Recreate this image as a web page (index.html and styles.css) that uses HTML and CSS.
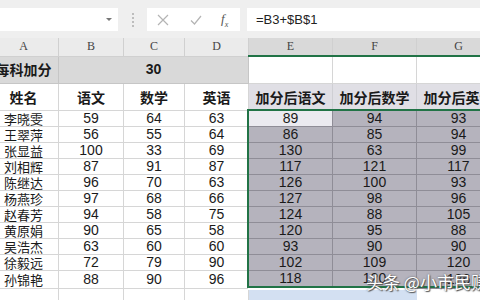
FILE: index.html
```html
<!DOCTYPE html>
<html lang="zh-CN">
<head>
<meta charset="UTF-8">
<title>每科加分</title>
<link rel="stylesheet" href="styles.css">
</head>
<body>
<div class="app">
  <div class="toolbar">
    <div class="namebox"><span class="arrow"></span></div>
    <div class="grip"><i></i><i></i><i></i><i></i></div>
    <div class="fxbox">
      <svg class="ico" width="12" height="12" viewBox="0 0 12 12"><path d="M1 1 L11 11 M11 1 L1 11" stroke="#b4b4b4" stroke-width="1.2" fill="none"/></svg>
      <svg class="ico" width="12" height="12" viewBox="0 0 12 12"><path d="M1 6.5 L4.5 10 L11 2" stroke="#b4b4b4" stroke-width="1.2" fill="none"/></svg>
      <span class="fx">f<sub>x</sub></span>
    </div>
    <div class="formula">=B3+$B$1</div>
  </div>

  <div class="sheet">
    <table class="grid">
      <colgroup>
        <col class="c-a"><col class="c-b"><col class="c-c"><col class="c-d">
        <col class="c-e"><col class="c-e"><col class="c-e">
      </colgroup>
      <tr class="letters">
        <th>A</th><th>B</th><th>C</th><th>D</th>
        <th class="sel">E</th><th class="sel">F</th><th class="sel">G</th>
      </tr>
      <tr class="bonus">
        <td class="label">每科加分</td>
        <td class="value" colspan="3">30</td>
        <td class="blank"></td><td class="blank"></td><td class="blank"></td>
      </tr>
      <tr class="heads">
        <td>姓名</td><td>语文</td><td>数学</td><td>英语</td>
        <td class="tint">加分后语文</td><td class="tint">加分后数学</td><td class="tint">加分后英语</td>
      </tr>
      <tr><td class="name">李晓雯</td><td>59</td><td>64</td><td>63</td><td class="active">89</td><td class="hi">94</td><td class="hi">93</td></tr>
      <tr><td class="name">王翠萍</td><td>56</td><td>55</td><td>64</td><td class="hi">86</td><td class="hi">85</td><td class="hi">94</td></tr>
      <tr><td class="name">张显益</td><td>100</td><td>33</td><td>69</td><td class="hi">130</td><td class="hi">63</td><td class="hi">99</td></tr>
      <tr><td class="name">刘相辉</td><td>87</td><td>91</td><td>87</td><td class="hi">117</td><td class="hi">121</td><td class="hi">117</td></tr>
      <tr><td class="name">陈继达</td><td>96</td><td>70</td><td>63</td><td class="hi">126</td><td class="hi">100</td><td class="hi">93</td></tr>
      <tr><td class="name">杨燕珍</td><td>97</td><td>68</td><td>66</td><td class="hi">127</td><td class="hi">98</td><td class="hi">96</td></tr>
      <tr><td class="name">赵春芳</td><td>94</td><td>58</td><td>75</td><td class="hi">124</td><td class="hi">88</td><td class="hi">105</td></tr>
      <tr><td class="name">黄原娟</td><td>90</td><td>65</td><td>58</td><td class="hi">120</td><td class="hi">95</td><td class="hi">88</td></tr>
      <tr><td class="name">吴浩杰</td><td>63</td><td>60</td><td>60</td><td class="hi">93</td><td class="hi">90</td><td class="hi">90</td></tr>
      <tr><td class="name">徐毅远</td><td>72</td><td>79</td><td>90</td><td class="hi">102</td><td class="hi">109</td><td class="hi">120</td></tr>
      <tr><td class="name">孙锦艳</td><td>88</td><td>90</td><td>96</td><td class="hi">118</td><td class="hi">120</td><td class="hi">126</td></tr>
      <tr class="tail"><td></td><td></td><td></td><td></td><td class="drag"></td><td class="drag"></td><td></td></tr>
    </table>
    <div class="selection"></div>
    <div class="watermark">头条 @小市民赚流</div>
  </div>
</div>
</body>
</html>
```

FILE: styles.css
```css
body {
  margin: 0;
  overflow: hidden;
  background: #fff;
  font-family: "Liberation Sans", "Noto Sans CJK SC", sans-serif;
}
.app {
  width: 480px;
  height: 300px;
  overflow: hidden;
}

/* formula bar */
.toolbar {
  height: 38px;
  background: #efefef;
  display: flex;
  align-items: flex-start;
  padding-top: 8px;
  box-sizing: border-box;
}
.namebox {
  width: 118px;
  height: 23px;
  background: #fff;
  position: relative;
}
.namebox .arrow {
  position: absolute;
  right: 6px;
  top: 10px;
  border-left: 3px solid transparent;
  border-right: 3px solid transparent;
  border-top: 3px solid #777;
}
.grip {
  width: 29px;
  height: 23px;
  display: flex;
  flex-direction: column;
  align-items: center;
  justify-content: center;
  gap: 2px;
}
.grip i {
  width: 2px;
  height: 2px;
  background: #bdbdbd;
}
.fxbox {
  width: 93px;
  height: 23px;
  background: #fff;
  display: flex;
  align-items: center;
  padding-left: 10px;
  gap: 21px;
  box-sizing: border-box;
}
.fx {
  font-family: "Liberation Serif", serif;
  font-style: italic;
  font-size: 13px;
  color: #555;
  margin-left: -2px;
}
.fx sub {
  font-size: 8px;
}
.formula {
  flex: 1;
  margin-left: 7px;
  height: 23px;
  background: #fff;
  font-size: 13px;
  line-height: 23px;
  color: #222;
  padding-left: 9px;
}

/* sheet */
.sheet {
  position: relative;
  height: 262px;
  overflow: hidden;
}
.grid {
  border-collapse: collapse;
  table-layout: fixed;
  width: 512px;
  margin-left: -12px;
}
.c-a { width: 70px; }
.c-b { width: 65px; }
.c-c { width: 61px; }
.c-d { width: 64px; }
.c-e { width: 84px; }
.grid td, .grid th {
  border: 1px solid #d6d6d6;
  padding: 0;
  text-align: center;
  height: 15px;
  line-height: 15px;
  font-size: 14px;
  color: #1a1a1a;
  white-space: nowrap;
  overflow: hidden;
}
.letters th {
  height: 17px;
  background: #ebebeb;
  font-family: "Liberation Serif", serif;
  font-weight: normal;
  font-size: 12px;
  color: #444;
  border-color: #d0d0d0;
  border-top: none;
}
.letters th.sel {
  background: #d9d9d9;
  border-bottom: 2px solid #217346;
}
.bonus td {
  height: 26px;
  font-weight: bold;
}
.bonus .label, .bonus .value {
  background: #d9d9d9;
  border-color: #c6c6c6;
}
.bonus .label {
  font-family: "Noto Sans CJK SC", sans-serif;
}
.heads td {
  height: 26px;
  font-family: "Noto Sans CJK SC", sans-serif;
  font-weight: bold;
  font-size: 14px;
}
.heads td.tint {
  background: #e0dfe5;
  border-color: #cfcfd4;
}
.name {
  font-family: "Noto Sans CJK SC", sans-serif;
}
.grid td.name {
  font-size: 13px;
}
.grid td.hi {
  background: #b5b3bd;
  border-color: #8f8d97;
}
.grid td.active {
  background: #ebeaf0;
  border-color: #8f8d97;
}
.tail td {
  height: 15px;
}
.tail td.drag {
  background: #d3e0f2;
  border-color: #d3e0f2;
  border-top: 4px solid #fff;
}

.selection {
  position: absolute;
  left: 247px;
  top: 71px;
  width: 260px;
  height: 175px;
  border: 2px solid #217346;
  pointer-events: none;
}
.watermark {
  position: absolute;
  left: 366px;
  top: 231px;
  font-family: "Noto Sans CJK SC", sans-serif;
  font-size: 17px;
  color: #fff;
  white-space: nowrap;
  text-shadow: 0 0 2px #555, 1px 1px 1px #555;
}
```
